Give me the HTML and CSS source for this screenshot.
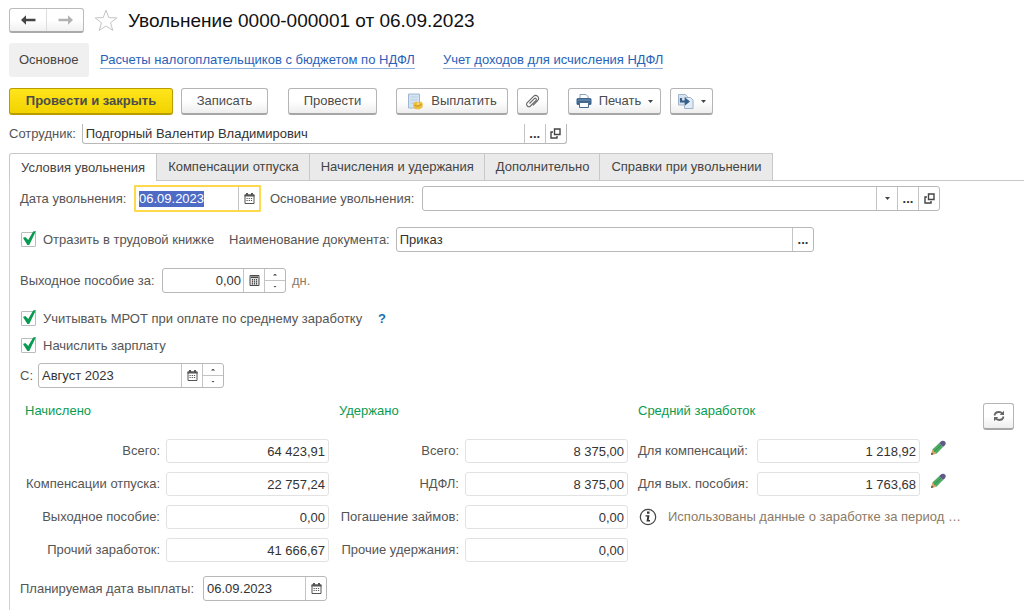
FILE: index.html
```html
<!DOCTYPE html>
<html lang="ru">
<head>
<meta charset="utf-8">
<meta name="viewport" content="width=device-width, initial-scale=1">
<title>Увольнение 0000-000001 от 06.09.2023</title>
<link rel="stylesheet" href="styles.css">
</head>
<body>
<svg class="sprite" aria-hidden="true">
  <symbol id="i-calendar" viewBox="0 0 11 11"><path d="M1 2h9v8.500H1z" fill="none" stroke="#555"/><path d="M.5 1.500h10v2H.5zM2 0h2v2H2zM7 0h2v2H7z" fill="#555"/><path d="M2.500 5.500h6M2.500 7.500h6" stroke="#555" stroke-width="1.200" stroke-dasharray="1.200 1"/></symbol>
  <symbol id="i-calc" viewBox="0 0 11 11"><path d="M1 .5h9v10H1z" fill="#ddd" stroke="#4a4a4a"/><path d="M2 1.500h7v1.500H2z" fill="#4a4a4a"/><path d="M3.500 4v6M5.500 4v6M7.500 4v6" stroke="#4a4a4a" stroke-dasharray="1.500 .5"/></symbol>
  <symbol id="i-open" viewBox="0 0 11 11"><path d="M4.500 1h5.500v5.500H4.500zM3 4H1v6h6V8" fill="none" stroke="#444" stroke-width="1.400"/></symbol>
  <symbol id="i-down" viewBox="0 0 5 3"><path d="M0 0h5L2.500 3z" fill="#444"/></symbol>
  <symbol id="i-pencil" viewBox="0 0 16 16"><path d="M1 15l1.300-5.500L6.500 13.700z" fill="#d9a35f"/><path d="M1 15l.7-2.500 1.800 1.800z" fill="#444"/><path d="M2.300 9.500L9 3.200 13 7 6.500 13.700z" fill="#4bab62"/><path d="M4 11.800L11 5" stroke="#329049"/><path d="M9 3.200L11.500 1q2.200-1 3.700.7 1 1.500 0 3.200L13 7z" fill="#5c5c86"/></symbol>
</svg>

<header class="header">
  <div class="history">
    <button class="history-btn" type="button" aria-label="Назад"><svg width="15" height="10" viewBox="0 0 15 10"><path d="M0 5L5 .3V3.800H14.500V6.200H5V9.700z" fill="#444"/></svg></button>
    <button class="history-btn" type="button" aria-label="Вперед"><svg width="15" height="10" viewBox="0 0 15 10"><path d="M15 5L10 .3V3.800H.5V6.200H10V9.700z" fill="#b2b2b2"/></svg></button>
  </div>
  <button class="star" type="button" aria-label="В избранное"><svg width="24" height="23" viewBox="0 0 24 23"><path d="M12 1.200l2.800 7.400 8 .3-6.300 4.900 2.300 7.600L12 17l-6.800 4.400 2.300-7.600L1.200 8.900l8-.3z" fill="none" stroke="#c4c4c4"/></svg></button>
  <h1 class="title">Увольнение 0000-000001 от 06.09.2023</h1>
</header>

<nav class="sections">
  <span class="section-current">Основное</span>
  <a class="link" href="#">Расчеты налогоплательщиков с бюджетом по НДФЛ</a>
  <a class="link" href="#">Учет доходов для исчисления НДФЛ</a>
</nav>

<div class="toolbar">
  <button class="btn btn-primary" type="button">Провести и закрыть</button>
  <button class="btn btn-write" type="button">Записать</button>
  <button class="btn btn-post" type="button">Провести</button>
  <button class="btn btn-pay" type="button"><svg width="17" height="17" viewBox="0 0 17 17"><path d="M1.500 1h11v14h-11z" fill="#d3e3f1" stroke="#9fb8d0"/><path d="M3.500 4h7M3.500 7h7M3.500 10h4" stroke="#b9d0e4"/><path d="M6 10.500L9 8.500l2 1 3-1 1.800 2-.3 4-3.500 2-4-.5-1.500-2z" fill="#edbd3c"/><path d="M7.500 12.500q3 2 7-1" fill="none" stroke="#c88e1d"/><circle cx="11" cy="10.800" r="1" fill="#ffe394"/></svg>Выплатить</button>
  <button class="btn btn-icon" type="button" aria-label="Присоединенные файлы"><svg width="15" height="15" viewBox="0 0 15 15"><path d="M4.500 9.500L9.300 4.600q1-.8 1.700 0 .7.900 0 1.700L5.500 12q-1.600 1.400-3.200 0-1.500-1.700 0-3.300L8.500 2.300q2.100-1.800 4.200 0 1.900 2.100 0 4.200L8 11.300" fill="none" stroke="#666" stroke-width="1.100"/></svg></button>
  <button class="btn btn-print" type="button"><svg width="16" height="14" viewBox="0 0 16 14"><path d="M4 4V.5h6L12 2.500V4" fill="#fff" stroke="#8aa0b8"/><rect x=".5" y="4" width="15" height="7" rx="1.500" fill="#3f6790"/><path d="M2 6h12" stroke="#7898b9"/><path d="M3.500 8.500h9v5h-9z" fill="#fff" stroke="#49698b"/></svg>Печать<svg class="caret" width="5" height="3"><use href="#i-down"/></svg></button>
  <button class="btn btn-create" type="button" aria-label="Создать на основании"><svg width="16" height="15" viewBox="0 0 16 15"><path d="M.5.5h7l2 2V11h-9z" fill="#d4e3f1" stroke="#a3b4c5"/><path d="M6.500 3.500h6l2.500 2.500v8.500H6.500z" fill="#e1ecf6" stroke="#9db0c4"/><path d="M3 4v3.500h4" fill="none" stroke="#345f8d" stroke-width="2.200"/><path d="M7 3.500l5 4-5 4z" fill="#345f8d"/></svg><svg class="caret" width="5" height="3"><use href="#i-down"/></svg></button>
</div>

<div class="employee">
  <label for="employee">Сотрудник:</label>
  <div class="field field-employee">
    <input id="employee" type="text" value="Подгорный Валентир Владимирович">
    <button class="cell dots" type="button" aria-label="Выбрать">...</button>
    <button class="cell" type="button" aria-label="Открыть"><svg width="11" height="11"><use href="#i-open"/></svg></button>
  </div>
</div>

<div class="tabs" role="tablist">
  <button class="tab tab-active" type="button" role="tab" aria-selected="true">Условия увольнения</button>
  <button class="tab" type="button" role="tab">Компенсации отпуска</button>
  <button class="tab" type="button" role="tab">Начисления и удержания</button>
  <button class="tab" type="button" role="tab">Дополнительно</button>
  <button class="tab" type="button" role="tab">Справки при увольнении</button>
</div>

<main class="panel">
  <div class="row row-reason">
    <label class="label-date" for="date">Дата увольнения:</label>
    <div class="field field-focus">
      <input id="date" type="text" value="06.09.2023">
      <button class="cell" type="button" aria-label="Календарь"><svg width="11" height="11"><use href="#i-calendar"/></svg></button>
    </div>
    <label class="label-next label-reason" for="reason">Основание увольнения:</label>
    <div class="field field-grow">
      <input id="reason" type="text">
      <button class="cell" type="button" aria-label="Список"><svg width="5" height="3"><use href="#i-down"/></svg></button>
      <button class="cell dots" type="button" aria-label="Выбрать">...</button>
      <button class="cell" type="button" aria-label="Открыть"><svg width="11" height="11"><use href="#i-open"/></svg></button>
    </div>
  </div>

  <div class="row row-book">
    <label class="check check-book"><input type="checkbox" checked>Отразить в трудовой книжке</label>
    <label class="label-next" for="docname">Наименование документа:</label>
    <div class="field field-grow">
      <input id="docname" type="text" value="Приказ">
      <button class="cell dots" type="button" aria-label="Выбрать">...</button>
    </div>
  </div>

  <div class="row row-severance">
    <label class="label-days" for="days">Выходное пособие за:</label>
    <div class="field field-days">
      <input id="days" class="num" type="text" value="0,00">
      <button class="cell" type="button" aria-label="Калькулятор"><svg width="11" height="11"><use href="#i-calc"/></svg></button>
      <div class="spin"><button type="button" aria-label="Больше"></button><button type="button" aria-label="Меньше"></button></div>
    </div>
    <span class="note">дн.</span>
  </div>

  <div class="row row-check">
    <label class="check check-minimum"><input type="checkbox" checked>Учитывать МРОТ при оплате по среднему заработку</label>
    <a class="help" href="#">?</a>
  </div>
  <div class="row row-check">
    <label class="check"><input type="checkbox" checked>Начислить зарплату</label>
  </div>

  <div class="row row-month">
    <label class="label-month" for="month">С:</label>
    <div class="field field-month">
      <input id="month" type="text" value="Август 2023">
      <button class="cell" type="button" aria-label="Календарь"><svg width="11" height="11"><use href="#i-calendar"/></svg></button>
      <div class="spin"><button type="button" aria-label="Больше"></button><button type="button" aria-label="Меньше"></button></div>
    </div>
  </div>

  <div class="totals">
    <section class="group group-accrued">
      <h2>Начислено</h2>
      <label for="a1">Всего:</label><input id="a1" class="sum" readonly value="64 423,91">
      <label for="a2">Компенсации отпуска:</label><input id="a2" class="sum" readonly value="22 757,24">
      <label for="a3">Выходное пособие:</label><input id="a3" class="sum" readonly value="0,00">
      <label for="a4">Прочий заработок:</label><input id="a4" class="sum" readonly value="41 666,67">
    </section>
    <section class="group group-withheld">
      <h2>Удержано</h2>
      <label for="b1">Всего:</label><input id="b1" class="sum" readonly value="8 375,00">
      <label for="b2">НДФЛ:</label><input id="b2" class="sum" readonly value="8 375,00">
      <label for="b3">Погашение займов:</label><input id="b3" class="sum" readonly value="0,00">
      <label for="b4">Прочие удержания:</label><input id="b4" class="sum" readonly value="0,00">
    </section>
    <section class="group group-average">
      <h2>Средний заработок</h2>
      <label for="c1">Для компенсаций:</label><input id="c1" class="sum" readonly value="1 218,92"><button class="edit" type="button" aria-label="Изменить"><svg width="16" height="16"><use href="#i-pencil"/></svg></button>
      <label for="c2">Для вых. пособия:</label><input id="c2" class="sum" readonly value="1 763,68"><button class="edit" type="button" aria-label="Изменить"><svg width="16" height="16"><use href="#i-pencil"/></svg></button>
      <p class="info"><svg width="18" height="18" viewBox="0 0 18 18"><circle cx="9" cy="9" r="7.700" fill="none" stroke="#444" stroke-width="1.200"/><path d="M8 3.500h2.500v2.300H8zM6.500 7.300h4l-.8 4.800h1.300v1.400H7.500L8.300 8.500H6.500z" fill="#333"/></svg><span>Использованы данные о заработке за период …</span></p>
    </section>
    <button class="btn refresh" type="button" aria-label="Обновить"><svg width="12" height="12" viewBox="0 0 12 12"><path d="M1.500 5.500Q2 2 6 2q2 0 3.500 1.800M10.500 6.500Q10 10 6 10q-2 0-3.500-1.800" fill="none" stroke="#666" stroke-width="1.800"/><path d="M11 .8V5H6.800zM1 11.200V7h4.200z" fill="#666"/></svg></button>
  </div>

  <div class="row row-payday">
    <label class="label-payday" for="payday">Планируемая дата выплаты:</label>
    <div class="field field-date">
      <input id="payday" type="text" value="06.09.2023">
      <button class="cell" type="button" aria-label="Календарь"><svg width="11" height="11"><use href="#i-calendar"/></svg></button>
    </div>
  </div>
</main>
<script src="script.js"></script>
</body>
</html>
```

FILE: styles.css
```css
* { box-sizing: border-box; }

body {
  margin: 0;
  padding: 8px 0 0 9px;
  background: #fff;
  color: #555;
  font: 13px/16px "Liberation Sans", Arial, sans-serif;
}

button, input { margin: 0; font: inherit; color: inherit; }
button { padding: 0; border: 0; background: none; }
label { white-space: nowrap; }
svg { flex: none; display: block; }
.sprite { display: none; }

/* Header */
.header { display: flex; align-items: center; height: 25px; }
.history {
  display: flex;
  width: 75px;
  height: 25px;
  border: 1px solid #bbb;
  border-bottom: 2px solid #aaa;
  border-radius: 3px;
  background: linear-gradient(#fff 50%, #f0f0f0);
}
.history-btn { flex: 1; display: flex; align-items: center; justify-content: center; }
.history-btn + .history-btn { border-left: 1px solid #ddd; }
.star { margin: 0 10px; }
.title { margin: 0; font-size: 19px; line-height: 24px; font-weight: 400; color: #111; }

.sections { display: flex; align-items: center; margin-top: 10px; }
.section-current {
  min-width: 80px;
  padding: 9px 10px;
  margin-right: 11px;
  border-radius: 3px;
  background: #f0f0f0;
  color: #444;
}
.link {
  margin-right: 28px;
  color: #2a62b8;
  text-decoration: none;
  border-bottom: 1px solid #8caedb;
}

/* Toolbar */
.toolbar { display: flex; margin-top: 11px; }
.btn {
  display: flex;
  align-items: center;
  justify-content: center;
  gap: 7px;
  height: 27px;
  border: 1px solid #b5b5b5;
  border-bottom: 2px solid #a6a6a6;
  border-radius: 3px;
  background: linear-gradient(#fff 50%, #eee);
  color: #4c4c4c;
}
.btn-primary {
  width: 164px;
  margin-right: 8px;
  border-color: #b89c00;
  background: linear-gradient(#ffe51c, #f2d300);
  font-weight: 700;
}
.btn-write { width: 87px; margin-right: 20px; }
.btn-post { width: 89px; margin-right: 19px; }
.btn-pay { width: 112px; margin-right: 9px; }
.btn-icon { width: 31px; margin-right: 20px; }
.btn-print { width: 93px; margin-right: 9px; }
.btn-create { width: 43px; }

/* Fields */
.field {
  display: flex;
  height: 25px;
  border: 1px solid #b8b8b8;
  border-radius: 3px;
  background: #fff;
  color: #333;
}
.field input { flex: 1; min-width: 0; padding: 0 3px; border: 0; background: none; outline: none; }
.field .num { text-align: right; padding: 0 2px; }
.cell {
  flex: none;
  display: flex;
  align-items: center;
  justify-content: center;
  width: 21px;
  border-left: 1px solid #c4c4c4;
}
.dots { font-weight: 700; }
.spin { display: flex; flex-direction: column; width: 21px; border-left: 1px solid #c4c4c4; }
.spin button { flex: 1; display: flex; align-items: center; justify-content: center; }
.spin button + button { border-top: 1px solid #c4c4c4; }
.spin button::after {
  content: "";
  width: 4px;
  height: 2px;
  background: #444;
  clip-path: polygon(50% 0, 100% 100%, 0 100%);
}
.spin button + button::after { clip-path: polygon(0 0, 100% 0, 50% 100%); }

.employee { display: flex; align-items: center; gap: 6px; margin-top: 9px; }
.field-employee {
  width: 485px;
  height: 20px;
  border-top: 0;
  border-radius: 0 0 3px 3px;
}

/* Tabs */
.tabs { display: flex; margin-top: 9px; border-bottom: 1px solid #c8c8c8; }
.tab {
  height: 27px;
  padding: 0 10px;
  border: 1px solid #c8c8c8;
  border-width: 1px 1px 0 0;
  background: #eaeaea;
  color: #444;
}
.tab-active {
  height: 28px;
  padding: 0 11px;
  margin-bottom: -1px;
  border-left-width: 1px;
  border-radius: 3px 0 0 0;
  background: #fff;
}
.tab:not(.tab-active) { padding-left: 11px; }

/* Panel */
.panel { padding: 4px 0 9px 10px; border-left: 1px solid #d0d0d0; }
.row { display: flex; align-items: center; gap: 6px; }
.label-next { margin-left: 3px; }
.label-date { min-width: 108px; }
.label-reason { min-width: 146px; }
.label-days { min-width: 136px; }
.label-month { width: 12px; }
.label-payday { min-width: 177px; }
.row-reason { max-width: 920px; }
.row-book { max-width: 794px; margin-top: 15px; }
.row-severance { margin-top: 16px; }
.row-check { height: 27px; }
.row-severance + .row-check { margin-top: 12px; }
.row-month { margin-top: 4px; }
.row-payday { margin-top: 14px; }
.field-grow { flex: 1; }
.field-focus {
  width: 127px;
  height: 27px;
  border: 2px solid #ffd94d;
  border-radius: 1px;
}
.field-days { width: 124px; }
.field-month { width: 186px; }
.field-date { width: 124px; }
#date::selection { background: #4d6bc4; color: #fff; }
.note { color: #8c7b66; }
.help { color: #1a6fb0; text-decoration: none; font-weight: 700; }

.check { display: flex; align-items: center; gap: 7px; }
.check-book { min-width: 200px; }
.check-minimum { min-width: 352px; }
.check input {
  position: relative;
  appearance: none;
  width: 15px;
  height: 15px;
  margin-left: 1px;
  border: 1px solid #bbb;
  border-radius: 1px;
  background: #fff;
}
.check input:checked::after {
  content: "";
  position: absolute;
  inset: -2px -1px 1px 1px;
  background: #069b50;
  clip-path: polygon(0 50%, 18% 42%, 40% 64%, 78% 4%, 100% 0, 48% 100%, 34% 100%);
}

/* Totals */
.totals { display: flex; align-items: flex-start; margin-top: 15px; padding-left: 5px; }
.group {
  display: grid;
  grid-template-rows: 27px;
  grid-auto-rows: 24px;
  gap: 9px 6px;
  align-items: center;
  margin-right: 10px;
}
.group h2 {
  grid-column: 1 / -1;
  align-self: start;
  margin: 0;
  font-size: 13px;
  line-height: 16px;
  font-weight: 400;
  color: #0b9b50;
}
.group-accrued { grid-template-columns: 135px 163px; }
.group-withheld { grid-template-columns: 120px 163px; }
.group-accrued label, .group-withheld label { text-align: right; }
.group-average {
  flex: 1;
  grid-template-columns: 113px 163px 1fr;
  min-width: 0;
  max-width: 332px;
  margin-right: auto;
}
.sum {
  width: 163px;
  height: 24px;
  padding: 0 3px;
  border: 1px solid #e2e2e2;
  border-radius: 3px;
  background: #fff;
  color: #333;
  text-align: right;
}
.edit { justify-self: start; margin: 0 0 6px 4px; }
.info {
  grid-column: 1 / -1;
  display: flex;
  align-items: center;
  gap: 11px;
  margin: 0;
  padding-left: 1px;
  color: #8c7b66;
  white-space: nowrap;
}
.refresh { width: 31px; margin-right: 10px; }
```

FILE: script.js
```js
const dateInput = document.getElementById('date');
dateInput.focus();
dateInput.select();
```
